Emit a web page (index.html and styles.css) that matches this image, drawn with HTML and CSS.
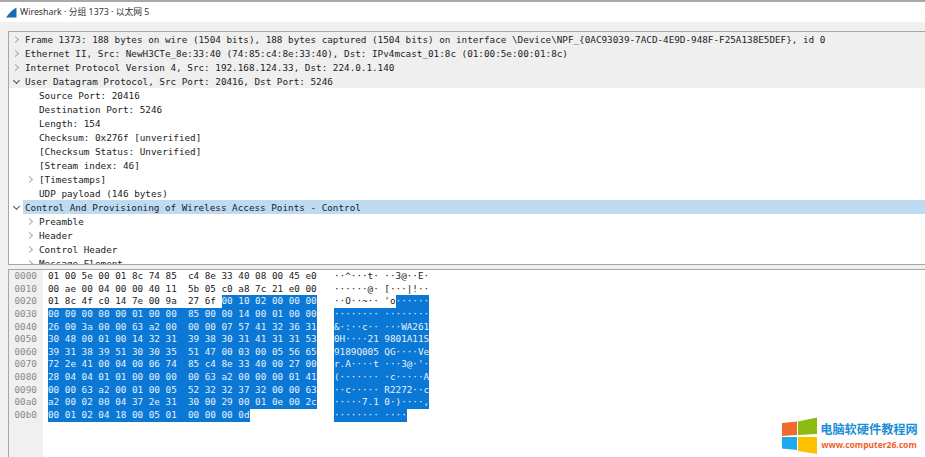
FILE: index.html
```html
<!DOCTYPE html>
<html lang="zh">
<head>
<meta charset="utf-8">
<title>Wireshark · 分组 1373 · 以太网 5</title>
<link rel="stylesheet" href="styles.css">
</head>
<body>
<div class="window">
  <header class="titlebar">
    <svg class="fin" width="11" height="11" viewBox="0 0 11 11"><path d="M0 10.5 C2.5 7.5 5.5 3 10.5 0.5 L10.5 10.5 Z" fill="#1a68b8"/></svg>
    <span>Wireshark · 分组 1373 · 以太网 5</span>
  </header>
  <main class="panes">
    <section class="tree">
      <div class="row shade"><i class="arrow"></i><span>Frame 1373: 188 bytes on wire (1504 bits), 188 bytes captured (1504 bits) on interface \Device\NPF_{0AC93039-7ACD-4E9D-948F-F25A138E5DEF}, id 0</span></div>
      <div class="row shade"><i class="arrow"></i><span>Ethernet II, Src: NewH3CTe_8e:33:40 (74:85:c4:8e:33:40), Dst: IPv4mcast_01:8c (01:00:5e:00:01:8c)</span></div>
      <div class="row shade"><i class="arrow"></i><span>Internet Protocol Version 4, Src: 192.168.124.33, Dst: 224.0.1.140</span></div>
      <div class="row shade"><i class="arrow open"></i><span>User Datagram Protocol, Src Port: 20416, Dst Port: 5246</span></div>
      <div class="row sub"><i class="arrow none"></i><span>Source Port: 20416</span></div>
      <div class="row sub"><i class="arrow none"></i><span>Destination Port: 5246</span></div>
      <div class="row sub"><i class="arrow none"></i><span>Length: 154</span></div>
      <div class="row sub"><i class="arrow none"></i><span>Checksum: 0x276f [unverified]</span></div>
      <div class="row sub"><i class="arrow none"></i><span>[Checksum Status: Unverified]</span></div>
      <div class="row sub"><i class="arrow none"></i><span>[Stream index: 46]</span></div>
      <div class="row sub"><i class="arrow"></i><span>[Timestamps]</span></div>
      <div class="row sub"><i class="arrow none"></i><span>UDP payload (146 bytes)</span></div>
      <div class="row"><i class="arrow open"></i><span class="selected">Control And Provisioning of Wireless Access Points - Control</span></div>
      <div class="row sub"><i class="arrow"></i><span>Preamble</span></div>
      <div class="row sub"><i class="arrow"></i><span>Header</span></div>
      <div class="row sub"><i class="arrow"></i><span>Control Header</span></div>
      <div class="row sub"><i class="arrow"></i><span>Message Element</span></div>
    </section>
    <section class="dump">
      <div class="offsets">
        <div class="line">0000</div><div class="line">0010</div><div class="line">0020</div><div class="line">0030</div>
        <div class="line">0040</div><div class="line">0050</div><div class="line">0060</div><div class="line">0070</div>
        <div class="line">0080</div><div class="line">0090</div><div class="line">00a0</div><div class="line">00b0</div>
      </div>
      <div class="bytes">
        <div class="line">01 00 5e 00 01 8c 74 85  c4 8e 33 40 08 00 45 e0</div>
        <div class="line">00 ae 00 04 00 00 40 11  5b 05 c0 a8 7c 21 e0 00</div>
        <div class="line">01 8c 4f c0 14 7e 00 9a  27 6f <b>00 10 02 00 00 00</b></div>
        <div class="line"><b>00 00 00 00 00 01 00 00  85 00 00 14 00 01 00 00</b></div>
        <div class="line"><b>26 00 3a 00 00 63 a2 00  00 00 07 57 41 32 36 31</b></div>
        <div class="line"><b>30 48 00 01 00 14 32 31  39 38 30 31 41 31 31 53</b></div>
        <div class="line"><b>39 31 38 39 51 30 30 35  51 47 00 03 00 05 56 65</b></div>
        <div class="line"><b>72 2e 41 00 04 00 06 74  85 c4 8e 33 40 00 27 00</b></div>
        <div class="line"><b>28 04 04 01 01 00 00 00  00 63 a2 00 00 00 01 41</b></div>
        <div class="line"><b>00 00 63 a2 00 01 00 05  52 32 32 37 32 00 00 63</b></div>
        <div class="line"><b>a2 00 02 00 04 37 2e 31  30 00 29 00 01 0e 00 2c</b></div>
        <div class="line"><b>00 01 02 04 18 00 05 01  00 00 00 0d</b></div>
      </div>
      <div class="ascii">
        <div class="line">··^···t· ··3@··E·</div>
        <div class="line">······@· [···|!··</div>
        <div class="line">··O··~·· 'o<b>······</b></div>
        <div class="line"><b>········ ········</b></div>
        <div class="line"><b>&amp;·:··c·· ···WA261</b></div>
        <div class="line"><b>0H····21 9801A11S</b></div>
        <div class="line"><b>9189Q005 QG····Ve</b></div>
        <div class="line"><b>r.A····t ···3@·'·</b></div>
        <div class="line"><b>(······· ·c·····A</b></div>
        <div class="line"><b>··c····· R2272··c</b></div>
        <div class="line"><b>·····7.1 0·)····,</b></div>
        <div class="line"><b>········ ····</b></div>
      </div>
    </section>
  </main>
  <aside class="watermark">
    <svg class="logo" width="36" height="38" viewBox="0 0 36 38">
      <path d="M0 6 L15 4.500 V18 L0 19 Z" fill="#f26b2e"/>
      <path d="M16 4.500 L35 0.500 V17 L16 18 Z" fill="#8cbb12"/>
      <path d="M0 20 H15 V33 L0 31.500 Z" fill="#1eaaf0"/>
      <path d="M16 20 H35 V37 L16 34 Z" fill="#ffc000"/>
    </svg>
    <div class="brand">
      <div class="brand-cn">电脑软硬件教程网</div>
      <div class="brand-url">www.computer26.com</div>
    </div>
  </aside>
</div>
</body>
</html>
```
FILE: styles.css
```css
* { box-sizing: border-box; }
html, body { margin: 0; height: 100%; overflow: hidden; background: #f0f0f0; }
.window { position: relative; height: 457px; display: flex; flex-direction: column; border-top: 2px solid #a9a9a9; }
.titlebar { height: 20px; flex: none; background: #fff; display: flex; align-items: center; gap: 3px; padding-left: 6px; font: 8.800px/20px "Noto Sans", "Noto Sans CJK SC", sans-serif; color: #333; }
.panes { flex: 1; min-height: 0; display: flex; flex-direction: column; gap: 4px; padding: 9px 0 0 8px; }
.tree { height: 234px; flex: none; overflow: hidden; background: #fff; border-top: 1px solid #a6a6a6; border-left: 1px solid #a6a6a6; border-bottom: 1px solid #a6a6a6; font: 9.3px/16px "DejaVu Sans Mono", monospace; color: #222; }
.row { height: 14px; display: flex; align-items: flex-start; white-space: pre; padding-left: 4px; }
.row span { height: 14px; }
.row.shade { background: #efefef; }
.row.sub { padding-left: 18px; }
.selected { flex: 1; background: #bfdbf1; margin-left: -2px; padding-left: 2px; }
.arrow { width: 12px; height: 14px; flex: none; position: relative; }
.arrow::before { content: ""; position: absolute; left: 0; top: 5px; width: 4px; height: 4px; border-top: 1px solid #a8a8a8; border-right: 1px solid #a8a8a8; transform: rotate(45deg); }
.arrow.open::before { left: 1px; top: 4px; border-color: #505050; transform: rotate(135deg); }
.arrow.none::before { display: none; }
.dump { flex: 1; min-height: 0; display: flex; background: #fff; border-top: 1px solid #a6a6a6; border-left: 1px solid #a6a6a6; font: 9.3px/12.65px "DejaVu Sans Mono", monospace; color: #222; }
.line { height: 12.65px; white-space: pre; }
.line b { display: inline-block; font-weight: normal; background: #0b78d6; color: #e6f1fb; }
.offsets { width: 34px; flex: none; background: #f0f0f0; color: #8a8a8a; padding-left: 5.500px; }
.bytes { width: 291px; flex: none; padding-left: 5px; }
.ascii { flex: 1; }
.watermark { position: absolute; right: 0; bottom: 0; width: 149px; height: 42px; display: flex; gap: 2px; padding: 1px 0 0 6px; background: #fff; }
.logo { margin-top: 1px; flex: none; }
.brand { width: 98px; flex: none; text-align: center; }
.brand-cn { font: bold 12.200px/16px "Noto Sans CJK SC", sans-serif; color: #1b8fd6; margin-top: 5px; }
.brand-url { font: bold 8.500px/11px "Noto Sans", sans-serif; color: #f0622a; margin-top: 1.500px; }
```
